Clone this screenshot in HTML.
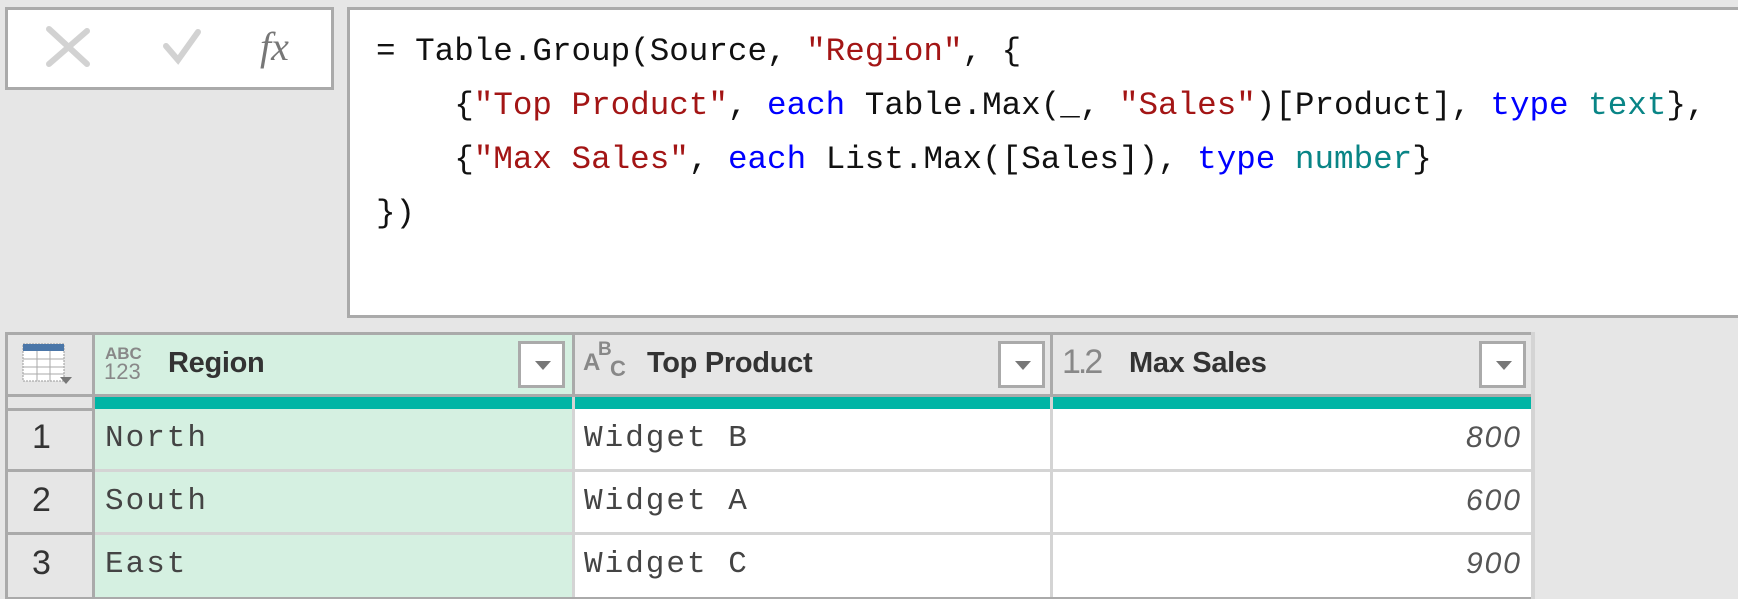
<html><head><style>
body{margin:0;width:1738px;height:599px;background:#e6e6e6;position:relative;overflow:hidden;font-family:"Liberation Sans",sans-serif}
.a{position:absolute;box-sizing:border-box}
.code{font-family:"Liberation Mono",monospace;font-size:32.6px;color:#111;white-space:pre;line-height:54px}
.s{color:#a31515}.k{color:#0000ff}.t{color:#098586}
.cell{font-family:"Liberation Mono",monospace;font-size:31px;color:#444;letter-spacing:2px}
.hd{font-weight:bold;font-size:29px;color:#333;letter-spacing:-0.3px}
.dd{background:#fff;border:3px solid #aaa;width:47px;height:47px}
.dd:after{content:"";position:absolute;left:14px;top:17px;border-left:8px solid transparent;border-right:8px solid transparent;border-top:9px solid #777}
.rn{font-size:34px;color:#333}
.num{font-size:30px;font-style:italic;color:#555;letter-spacing:2px}
</style></head><body>
<div class="a" style="left:5px;top:7px;width:329px;height:83px;background:#fff;border:3px solid #aaa"></div>
<svg class="a" style="left:0;top:0" width="340" height="90">
<path d="M49 29 L87 64 M87 31 L49 64" stroke="#d2d2d2" stroke-width="6" stroke-linecap="round"/>
<path d="M166 46 L178 60 L198 32" stroke="#d2d2d2" stroke-width="6" fill="none" stroke-linecap="round"/>
<text x="260" y="60" font-family="Liberation Serif" font-style="italic" font-size="40" fill="#777">fx</text>
</svg>
<div class="a" style="left:347px;top:7px;width:1400px;height:311px;background:#fff;border:3px solid #aaa"></div>
<div class="a code" style="left:376px;top:25px">= Table.Group(Source, <span class="s">"Region"</span>, {
    {<span class="s">"Top Product"</span>, <span class="k">each</span> Table.Max(_, <span class="s">"Sales"</span>)[Product], <span class="k">type</span> <span class="t">text</span>},
    {<span class="s">"Max Sales"</span>, <span class="k">each</span> List.Max([Sales]), <span class="k">type</span> <span class="t">number</span>}
})</div>
<!-- table -->
<div class="a" style="left:5px;top:332px;width:1530px;height:267px;background:#aaa"></div>
<div class="a" style="left:8px;top:335px;width:84px;height:59px;background:#e6e6e6"></div>
<div class="a" style="left:95px;top:335px;width:477px;height:59px;background:#d5f0e1"></div>
<div class="a" style="left:575px;top:335px;width:475px;height:59px;background:#e6e6e6"></div>
<div class="a" style="left:1053px;top:335px;width:478px;height:59px;background:#e6e6e6"></div>
<div class="a" style="left:8px;top:397px;width:84px;height:11px;background:#e6e6e6"></div>
<div class="a" style="left:95px;top:397px;width:1436px;height:12px;background:#00b5a5"></div>
<div class="a" style="left:572px;top:397px;width:3px;height:12px;background:#d4d4d4"></div>
<div class="a" style="left:1050px;top:397px;width:3px;height:12px;background:#d4d4d4"></div>
<!-- rows -->
<div class="a" style="left:95px;top:409px;width:477px;height:188px;background:#d5f0e1"></div>
<div class="a" style="left:575px;top:409px;width:956px;height:188px;background:#fff"></div>
<div class="a" style="left:572px;top:409px;width:3px;height:188px;background:#d4d4d4"></div>
<div class="a" style="left:1050px;top:409px;width:3px;height:188px;background:#d4d4d4"></div>
<div class="a" style="left:95px;top:469px;width:1436px;height:3px;background:#d4d4d4"></div>
<div class="a" style="left:95px;top:532px;width:1436px;height:3px;background:#d4d4d4"></div>
<div class="a" style="left:1531px;top:332px;width:4px;height:267px;background:#d4d4d4"></div>
<div class="a" style="left:8px;top:411px;width:84px;height:58px;background:#e6e6e6"></div>
<div class="a" style="left:8px;top:472px;width:84px;height:60px;background:#e6e6e6"></div>
<div class="a" style="left:8px;top:535px;width:84px;height:62px;background:#e6e6e6"></div>
<div class="a rn" style="left:32px;top:418px">1</div>
<div class="a rn" style="left:32px;top:481px">2</div>
<div class="a rn" style="left:32px;top:544px">3</div>
<div class="a cell" style="left:105px;top:421px">North</div>
<div class="a cell" style="left:105px;top:484px">South</div>
<div class="a cell" style="left:105px;top:547px">East</div>
<div class="a cell" style="left:584px;top:421px">Widget B</div>
<div class="a cell" style="left:584px;top:484px">Widget A</div>
<div class="a cell" style="left:584px;top:547px">Widget C</div>
<div class="a num" style="right:216px;top:421px">800</div>
<div class="a num" style="right:216px;top:484px">600</div>
<div class="a num" style="right:216px;top:547px">900</div>
<!-- header content -->
<svg class="a" style="left:22px;top:343px" width="50" height="42">
<rect x="1" y="1" width="41" height="37" fill="#fff" stroke="#999" stroke-dasharray="2 1"/>
<rect x="1" y="1" width="41" height="7" fill="#4a76a8"/>
<path d="M1 16H42M1 24H42M1 31H42M15 8V38M28 8V38" stroke="#aaa"/>
<path d="M38 34h12l-6 7z" fill="#777"/>
</svg>
<div class="a" style="left:105px;top:345px;font-size:17px;font-weight:bold;color:#888;line-height:17px">ABC</div>
<div class="a" style="left:104px;top:361px;font-size:22px;color:#888;line-height:22px">123</div>
<div class="a hd" style="left:168px;top:347px">Region</div>
<div class="a dd" style="left:518px;top:341px"></div>
<div class="a" style="left:583px;top:349px;font-size:24px;font-weight:bold;color:#888">A</div>
<div class="a" style="left:598px;top:339px;font-size:19px;font-weight:bold;color:#888">B</div>
<div class="a" style="left:610px;top:356px;font-size:22px;font-weight:bold;color:#888">C</div>
<div class="a hd" style="left:647px;top:347px">Top Product</div>
<div class="a dd" style="left:998px;top:341px"></div>
<div class="a" style="left:1062px;top:343px;font-size:34px;color:#888;letter-spacing:-3px">1.2</div>
<div class="a hd" style="left:1129px;top:347px">Max Sales</div>
<div class="a dd" style="left:1479px;top:341px"></div>
</body></html>
